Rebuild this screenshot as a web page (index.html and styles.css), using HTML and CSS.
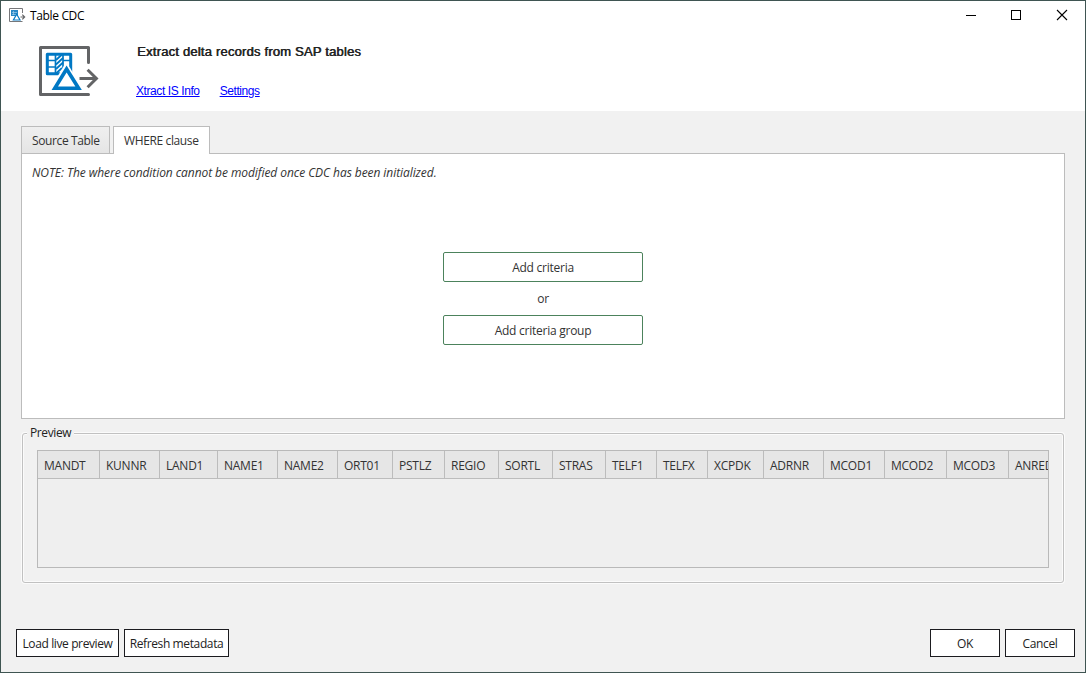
FILE: index.html
```html
<!DOCTYPE html>
<html lang="en">
<head>
<meta charset="utf-8">
<title>Table CDC</title>
<link rel="stylesheet" href="styles.css">
</head>
<body>
<svg class="defs" aria-hidden="true">
  <symbol id="logo" viewBox="36 44 64 54">
    <path d="M88.5 62.5V47.5H40.5V94.5H88.5" fill="none" stroke="#636466" stroke-width="3" stroke-linecap="round" stroke-linejoin="round"/>
    <path d="M79.5 78.5H96M87.6 69.8L96.4 78.5L87.6 87.2" fill="none" stroke="#636466" stroke-width="3"/>
    <path d="M47.3 54.3H70.7V73.7H47.3Z" fill="#fff" stroke="#0078c4" stroke-width="3" stroke-linejoin="round"/>
    <path d="M46 60.5H56M46 67H56M62.5 60.5H72M62.5 67H72M55.5 53V75M63 53V75" fill="none" stroke="#0078c4" stroke-width="1.7"/>
    <path d="M56 60L62 54.5M56 64.5L63 58M56 69L63 62.5M56 73.5L62 68" fill="none" stroke="#0078c4" stroke-width="1.8"/>
    <path d="M66.4 61.5L83.5 91H49Z" fill="#fff"/>
    <path d="M66.6 69L78.6 88.2H54.8Z" fill="#fff" stroke="#0078c4" stroke-width="3.6"/>
  </symbol>
</svg>
<div class="window">
  <header class="banner">
    <div class="titlebar">
      <svg class="app-icon" viewBox="0 0 17 15">
        <path d="M13.5 5V.5H.5V13.5H13.5" fill="none" stroke="#76777a"/>
        <path d="M11.5 9H15.5M13.3 6.7L15.7 9L13.3 11.3" fill="none" stroke="#636466" stroke-width="1.1"/>
        <path d="M2 2H9V8H2Z" fill="#2787c6"/>
        <path d="M3 4.5H8M3 6.5H8M4.5 3V7" stroke="#9fcbe8" stroke-width=".7"/>
        <path d="M7.7 6.2L11 12H4.4Z" fill="#fff" stroke="#0a7bc4" stroke-width="1.2"/>
      </svg>
      <span class="caption">Table CDC</span>
      <svg class="controls" viewBox="0 0 104 12" shape-rendering="crispEdges">
        <path d="M0 6.5H10M45.5 1.5H54.5V10.5H45.5Z" fill="none" stroke="#000"/>
        <path d="M91 1L101 11M101 1L91 11" stroke="#000" stroke-width="1.1" shape-rendering="auto"/>
      </svg>
    </div>
    <div class="intro">
      <svg class="logo"><use href="#logo"/></svg>
      <div class="intro-text">
        <h1>Extract delta records from SAP tables</h1>
        <nav class="links"><a class="info" href="#">Xtract IS Info</a><a class="settings" href="#">Settings</a></nav>
      </div>
    </div>
  </header>
  <main class="content">
    <div class="tabs">
      <div class="tab source"><span>Source Table</span></div>
      <div class="tab active"><span>WHERE clause</span></div>
    </div>
    <section class="panel">
      <p class="note">NOTE: The where condition cannot be modified once CDC has been initialized.</p>
      <div class="criteria">
        <button class="add">Add criteria</button>
        <span>or</span>
        <button class="add">Add criteria group</button>
      </div>
    </section>
    <fieldset class="preview">
      <legend>Preview</legend>
      <div class="table">
        <div class="columns">
          <div>MANDT</div><div>KUNNR</div><div>LAND1</div><div>NAME1</div><div>NAME2</div><div>ORT01</div><div>PSTLZ</div><div>REGIO</div><div>SORTL</div><div>STRAS</div><div>TELF1</div><div>TELFX</div><div>XCPDK</div><div>ADRNR</div><div>MCOD1</div><div>MCOD2</div><div>MCOD3</div><div>ANRED</div>
        </div>
      </div>
    </fieldset>
  </main>
  <footer class="actions">
    <button class="load">Load live preview</button>
    <button class="refresh">Refresh metadata</button>
    <button class="ok">OK</button>
    <button class="cancel">Cancel</button>
  </footer>
</div>
</body>
</html>
```

FILE: styles.css
```css
* { box-sizing: border-box; }
body { margin: 0; font: 12px/16px "Open Sans", "Noto Sans", sans-serif; letter-spacing: -0.25px; color: #222; }
.defs { display: none; }
.window { width: 1086px; height: 673px; border: 1px solid #3f5552; background: #f1f1f1; display: flex; flex-direction: column; overflow: hidden; }
.banner { height: 110px; background: #fff; flex: none; }
.titlebar { height: 30px; display: flex; align-items: center; padding: 0 15px 0 8px; color: #000; }
.app-icon { width: 17px; height: 15px; margin: 0 4px 1px 0; }
.caption { flex: 1; letter-spacing: -0.35px; }
.controls { width: 104px; height: 12px; margin-bottom: 2px; }
.intro { display: flex; padding: 13px 0 0 35px; }
.logo { width: 64px; height: 54px; }
.intro-text { padding-left: 36px; font-family: "Liberation Sans", Arial, sans-serif; }
h1 { margin: 0 0 0 1px; font-size: 13px; line-height: 16px; font-weight: 400; letter-spacing: 0.2px; text-shadow: 0.6px 0 #222; }
.links { display: flex; gap: 20px; margin-top: 23px; }
.links a { color: #00f; letter-spacing: -0.41px; }
.content { padding: 15px 20px 0; flex: 1; }
.tabs { display: flex; gap: 3px; align-items: stretch; height: 28px; }
.tab { height: 27px; padding: 6px 10px 0; border: 1px solid #bcbcbc; border-bottom: 0; background: linear-gradient(#efefef, #e5e5e5); color: #333; white-space: nowrap; letter-spacing: -0.38px; }
.source { width: 89px; }
.active { width: 97px; height: 28px; background: #fff; position: relative; }
.panel { height: 266px; margin-top: -1px; border: 1px solid #bcbcbc; background: #fff; color: #333; }
.note { margin: 11px 0 0 10px; font-style: italic; letter-spacing: -0.07px; }
.criteria { display: flex; flex-direction: column; align-items: center; margin-top: 71px; }
.criteria span { margin: 9px 0 8px; }
button { font: inherit; letter-spacing: inherit; padding: 2px 0 0; white-space: nowrap; background: #fff; color: #222; }
.add { width: 200px; height: 30px; border: 1px solid #4c825c; border-radius: 2px; color: #333; }
.preview { margin: 6px 1px 0; padding: 9px 14px 0; height: 158px; border: 1px solid #c1c1c1; border-radius: 3px; box-shadow: 0 0 0 1px #fbfbfb, inset 0 0 0 1px #fbfbfb; min-width: 0; }
.preview legend { padding: 0 3px; margin-left: -10px; letter-spacing: -0.4px; background: #f1f1f1; }
.table { height: 118px; border: 1px solid #b9b9b9; background: #efefef; overflow: hidden; }
.columns { display: grid; grid-template-columns: 62px 60px 58px 60px 60px 55px 52px 54px 54px 53px 51px 51px 56px 60px 61px 62px 62px 41px; height: 28px; background: #e6e6e6; border-bottom: 1px solid #bcbcbc; color: #333; }
.columns div { padding: 7px 0 0 6px; border-right: 1px solid #bcbcbc; overflow: hidden; }
.columns div:last-child { border: 0; }
.actions { height: 43px; flex: none; display: flex; padding: 0 10px 0 15px; gap: 5px; }
.actions button { height: 28px; border: 1px solid #1b1b1f; letter-spacing: -0.38px; }
.load { width: 103px; }
.refresh { width: 105px; }
.ok, .cancel { width: 70px; }
.ok { margin-left: auto; }
```
